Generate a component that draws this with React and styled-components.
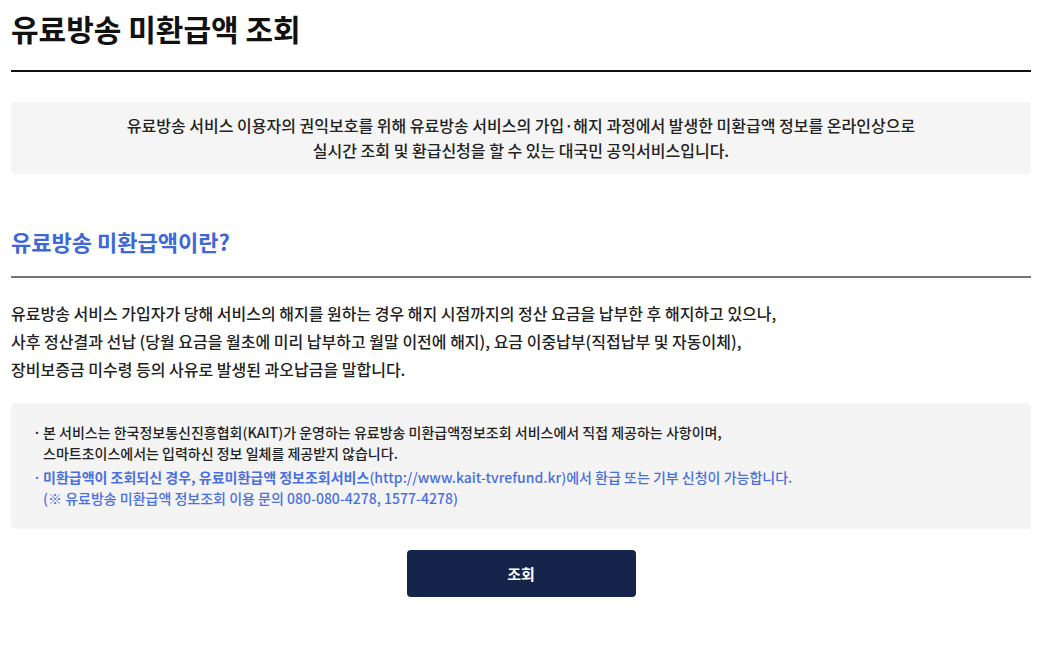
import React from 'react'
import styled, { createGlobalStyle } from 'styled-components'

const GlobalStyle = createGlobalStyle`
    * {
        box-sizing: border-box;
    }

    body {
        margin: 0;
        background: #fff;
        color: #111;
        font-family: 'Noto Sans CJK KR', 'Noto Sans', sans-serif;
    }
`;

const Page = styled.div`
    padding: 0 14px 40px 11px;
`;

const Header = styled.header`
    padding: 8px 0 22px;
    border-bottom: 2px solid #111;
`;

const Title = styled.h1`
    margin: 0;
    font-size: 30px;
    line-height: 40px;
    font-weight: 700;
    color: #111;
`;

const Intro = styled.div`
    margin-top: 30px;
    padding: 11px 20px;
    background: #f5f5f5;
    border-radius: 4px;
    text-align: center;
    font-size: 16px;
    line-height: 25px;
    font-weight: 500;
    color: #222;
`;

const SectionHead = styled.h2`
    margin: 51px 0 0;
    padding-bottom: 19px;
    border-bottom: 2px solid #747474;
    font-size: 22px;
    line-height: 32px;
    font-weight: 700;
    color: #3e68d6;
`;

const Body = styled.p`
    margin: 21px 0 0;
    font-size: 16px;
    line-height: 28px;
    font-weight: 500;
    color: #222;
`;

const Notice = styled.ul`
    list-style: none;
    margin: 20px 0 0;
    padding: 19px 22px 20px;
    background: #f4f4f4;
    border-radius: 4px;
    font-size: 14px;
    line-height: 21px;
    font-weight: 500;
`;

const NoticeItem = styled.li`
    display: flex;
    gap: 5px;
    color: ${p => (p.$accent ? '#4a6fe0' : '#222')};

    & + & {
        margin-top: 3px;
    }

    &::before {
        content: '·';
        width: 5px;
        flex: none;
    }

    strong {
        font-weight: 700;
    }
`;

const Actions = styled.div`
    display: flex;
    justify-content: center;
    margin-top: 21px;
`;

const Button = styled.button`
    width: 229px;
    height: 47px;
    border: 0;
    border-radius: 4px;
    background: #14244b;
    color: #fff;
    font-family: inherit;
    font-size: 15px;
    font-weight: 700;
    cursor: pointer;
`;

const App = () => (
    <Page>
        <GlobalStyle />
        <Header>
            <Title>유료방송 미환급액 조회</Title>
        </Header>

        <Intro>
            유료방송 서비스 이용자의 권익보호를 위해 유료방송 서비스의 가입·해지 과정에서 발생한 미환급액 정보를 온라인상으로
            <br />
            실시간 조회 및 환급신청을 할 수 있는 대국민 공익서비스입니다.
        </Intro>

        <SectionHead>유료방송 미환급액이란?</SectionHead>
        <Body>
            유료방송 서비스 가입자가 당해 서비스의 해지를 원하는 경우 해지 시점까지의 정산 요금을 납부한 후 해지하고 있으나,
            <br />
            사후 정산결과 선납 (당월 요금을 월초에 미리 납부하고 월말 이전에 해지), 요금 이중납부(직접납부 및 자동이체),
            <br />
            장비보증금 미수령 등의 사유로 발생된 과오납금을 말합니다.
        </Body>

        <Notice>
            <NoticeItem>
                <span>
                    본 서비스는 한국정보통신진흥협회(KAIT)가 운영하는 유료방송 미환급액정보조회 서비스에서 직접 제공하는 사항이며,
                    <br />
                    스마트초이스에서는 입력하신 정보 일체를 제공받지 않습니다.
                </span>
            </NoticeItem>
            <NoticeItem $accent>
                <span>
                    <strong>미환급액이 조회되신 경우, 유료미환급액 정보조회서비스</strong>(http://www.kait-tvrefund.kr)에서 환급 또는 기부 신청이 가능합니다.
                    <br />
                    (※ 유료방송 미환급액 정보조회 이용 문의 080-080-4278, 1577-4278)
                </span>
            </NoticeItem>
        </Notice>

        <Actions>
            <Button type="button">조회</Button>
        </Actions>
    </Page>
)

export default App
